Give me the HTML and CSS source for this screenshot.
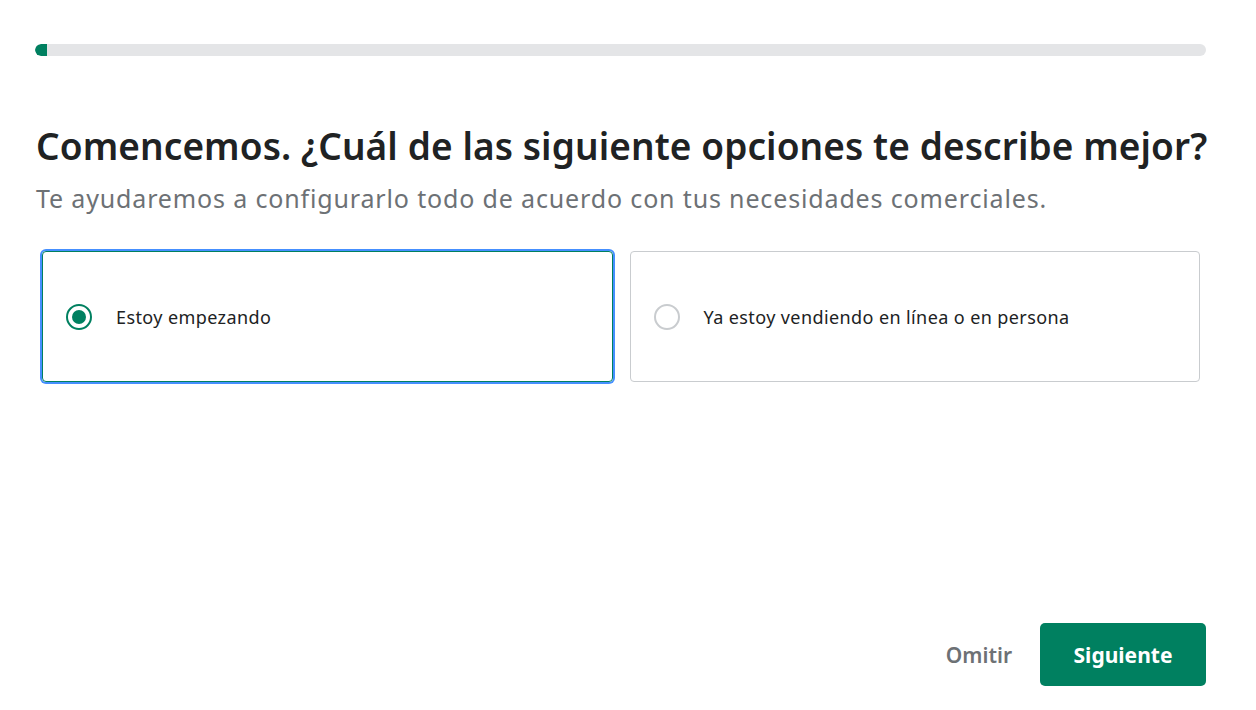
FILE: index.html
```html
<!DOCTYPE html>
<html lang="es">
<head>
<meta charset="utf-8">
<title>Comencemos</title>
<link rel="stylesheet" href="styles.css">
</head>
<body>
<div class="page">
  <div class="progress"><div class="progress-fill"></div></div>
  <h1 class="title">Comencemos. ¿Cuál de las siguiente opciones te describe mejor?</h1>
  <p class="subtitle">Te ayudaremos a configurarlo todo de acuerdo con tus necesidades comerciales.</p>
  <div class="options">
    <label class="option option-selected">
      <span class="radio radio-on"><span class="radio-dot"></span></span>
      <span class="option-text">Estoy empezando</span>
    </label>
    <label class="option">
      <span class="radio"></span>
      <span class="option-text">Ya estoy vendiendo en línea o en persona</span>
    </label>
  </div>
  <div class="spacer"></div>
  <div class="actions">
    <button class="btn-skip">Omitir</button>
    <button class="btn-next">Siguiente</button>
  </div>
</div>
</body>
</html>
```
FILE: styles.css
```css
html, body {
  margin: 0;
  padding: 0;
  background: #ffffff;
}
body {
  font-family: "Noto Sans", "Open Sans", sans-serif;
  color: #202223;
}
.page {
  box-sizing: border-box;
  width: 1256px;
  height: 710px;
  padding: 44px 50px 24px 35px;
  display: flex;
  flex-direction: column;
}
.progress {
  height: 12px;
  background: #e4e5e7;
  border-radius: 6px;
  overflow: hidden;
}
.progress-fill {
  width: 12px;
  height: 100%;
  background: #008060;
  border-radius: 6px 0 0 6px;
}
.title {
  margin: 66px 0 0 1px;
  font-size: 37px;
  font-weight: 600;
  letter-spacing: 0.1px;
  line-height: 48px;
  color: #202223;
  white-space: nowrap;
}
.subtitle {
  margin: 12px 0 0 1px;
  font-size: 25px;
  letter-spacing: 0.85px;
  line-height: 32px;
  color: #6d7175;
  white-space: nowrap;
}
.options {
  display: grid;
  grid-template-columns: 1fr 1fr;
  gap: 17px;
  margin: 37px 6px 0 7px;
}
.option {
  box-sizing: border-box;
  height: 131px;
  border: 1px solid #c9cccf;
  border-radius: 4px;
  display: flex;
  align-items: center;
  padding: 0 0 0 23px;
  cursor: pointer;
}
.option-selected {
  border-color: #008060;
  box-shadow: 0 0 0 2px #458fff;
}
.radio {
  box-sizing: border-box;
  width: 26px;
  height: 26px;
  border-radius: 50%;
  border: 2px solid #c9cccf;
  display: flex;
  align-items: center;
  justify-content: center;
  flex: none;
}
.radio-on {
  border-color: #008060;
}
.radio-dot {
  width: 14px;
  height: 14px;
  border-radius: 50%;
  background: #008060;
}
.option-text {
  margin-left: 24px;
  font-size: 18px;
  letter-spacing: 0.4px;
  color: #202223;
}
.spacer {
  flex: 1;
}
.actions {
  display: flex;
  justify-content: flex-end;
  align-items: center;
  gap: 26px;
}
.btn-skip {
  border: none;
  background: none;
  font-family: inherit;
  font-size: 21px;
  font-weight: 600;
  color: #6d7175;
  padding: 0 2px;
  cursor: pointer;
}
.btn-next {
  border: none;
  background: #008060;
  color: #ffffff;
  font-family: inherit;
  font-size: 21px;
  font-weight: 700;
  width: 166px;
  height: 63px;
  border-radius: 5px;
  cursor: pointer;
}
```
